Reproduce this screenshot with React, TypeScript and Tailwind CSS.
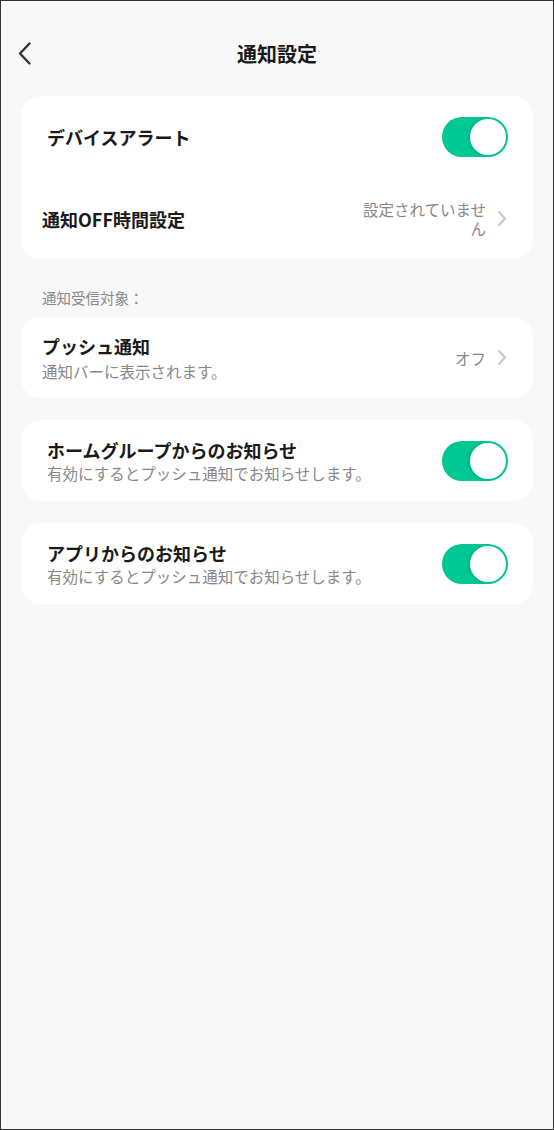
import { useState } from "react";

const FONT = { fontFamily: '"Noto Sans CJK JP", "Noto Sans", sans-serif' };

function Toggle({ on, onChange }: { on: boolean; onChange: () => void }) {
  return (
    <button
      type="button"
      onClick={onChange}
      className={`w-[66px] h-[40px] rounded-full p-[2px] flex shrink-0 transition-colors ${
        on ? "bg-[#00c894] justify-end" : "bg-[#e2e2e2] justify-start"
      }`}
    >
      <span className="w-[36px] h-[36px] rounded-full bg-white shadow-[-2px_0_4px_rgba(0,0,0,0.12)]" />
    </button>
  );
}

function Chevron() {
  return (
    <svg width="10" height="17" viewBox="0 0 10 17" fill="none" className="shrink-0">
      <path d="M2 2l6 6.5L2 15" stroke="#c7c7c7" strokeWidth="2" strokeLinecap="round" strokeLinejoin="round" />
    </svg>
  );
}

export default function App() {
  const [deviceAlert, setDeviceAlert] = useState(true);
  const [homeGroup, setHomeGroup] = useState(true);
  const [fromApp, setFromApp] = useState(true);

  return (
    <div style={FONT} className="w-[554px] h-[1130px] border border-[#333] bg-[#f8f8f8] text-[#1a1a1a]">
      {/* header */}
      <div className="grid grid-cols-[1fr_auto_1fr] items-center h-[48px] mt-[29px] mb-[18px] px-[16px]">
        <button type="button" className="justify-self-start">
          <svg width="16" height="26" viewBox="0 0 16 26" fill="none">
            <path d="M12.5 2.5L3 12.5l9.5 10" stroke="#333" strokeWidth="2.4" strokeLinecap="round" strokeLinejoin="round" />
          </svg>
        </button>
        <h1 className="text-[20px] font-bold leading-[28px]">通知設定</h1>
        <div />
      </div>

      <div className="mx-[20px]">
        {/* device alert / off time */}
        <div className="bg-white rounded-[20px]">
          <div className="h-[82px] flex items-center justify-between pl-[26px] pr-[25px]">
            <span className="text-[18px] font-bold leading-[24px]">デバイスアラート</span>
            <Toggle on={deviceAlert} onChange={() => setDeviceAlert(v => !v)} />
          </div>
          <div className="h-[81px] flex items-center justify-between pl-[21px] pr-[26px]">
            <span className="text-[18px] font-bold leading-[24px]">通知OFF時間設定</span>
            <div className="flex items-center gap-[11px]">
              <span className="w-[130px] text-right text-[15.5px] leading-[19px] text-[#888]">設定されていません</span>
              <Chevron />
            </div>
          </div>
        </div>

        <div className="pl-[21px] mt-[29px] mb-[9px] text-[14.5px] leading-[20px] text-[#888]">通知受信対象：</div>

        {/* push */}
        <div className="bg-white rounded-[20px] h-[81px] flex items-center justify-between pl-[21px] pr-[26px]">
          <div className="flex flex-col">
            <span className="text-[18px] font-bold leading-[24px]">プッシュ通知</span>
            <span className="mt-[3px] text-[15.5px] leading-[20px] text-[#888]">通知バーに表示されます。</span>
          </div>
          <div className="flex items-center gap-[11px]">
            <span className="text-[15.5px] leading-[20px] text-[#888]">オフ</span>
            <Chevron />
          </div>
        </div>

        {/* home group */}
        <div className="bg-white rounded-[20px] h-[81px] flex items-center justify-between pl-[26px] pr-[25px] mt-[22px]">
          <div className="flex flex-col">
            <span className="text-[18px] font-bold leading-[24px]">ホームグループからのお知らせ</span>
            <span className="mt-[1px] text-[15.5px] leading-[20px] text-[#888]">有効にするとプッシュ通知でお知らせします。</span>
          </div>
          <Toggle on={homeGroup} onChange={() => setHomeGroup(v => !v)} />
        </div>

        {/* app */}
        <div className="bg-white rounded-[20px] h-[81px] flex items-center justify-between pl-[26px] pr-[25px] mt-[22px]">
          <div className="flex flex-col">
            <span className="text-[18px] font-bold leading-[24px]">アプリからのお知らせ</span>
            <span className="mt-[1px] text-[15.5px] leading-[20px] text-[#888]">有効にするとプッシュ通知でお知らせします。</span>
          </div>
          <Toggle on={fromApp} onChange={() => setFromApp(v => !v)} />
        </div>
      </div>
    </div>
  );
}
